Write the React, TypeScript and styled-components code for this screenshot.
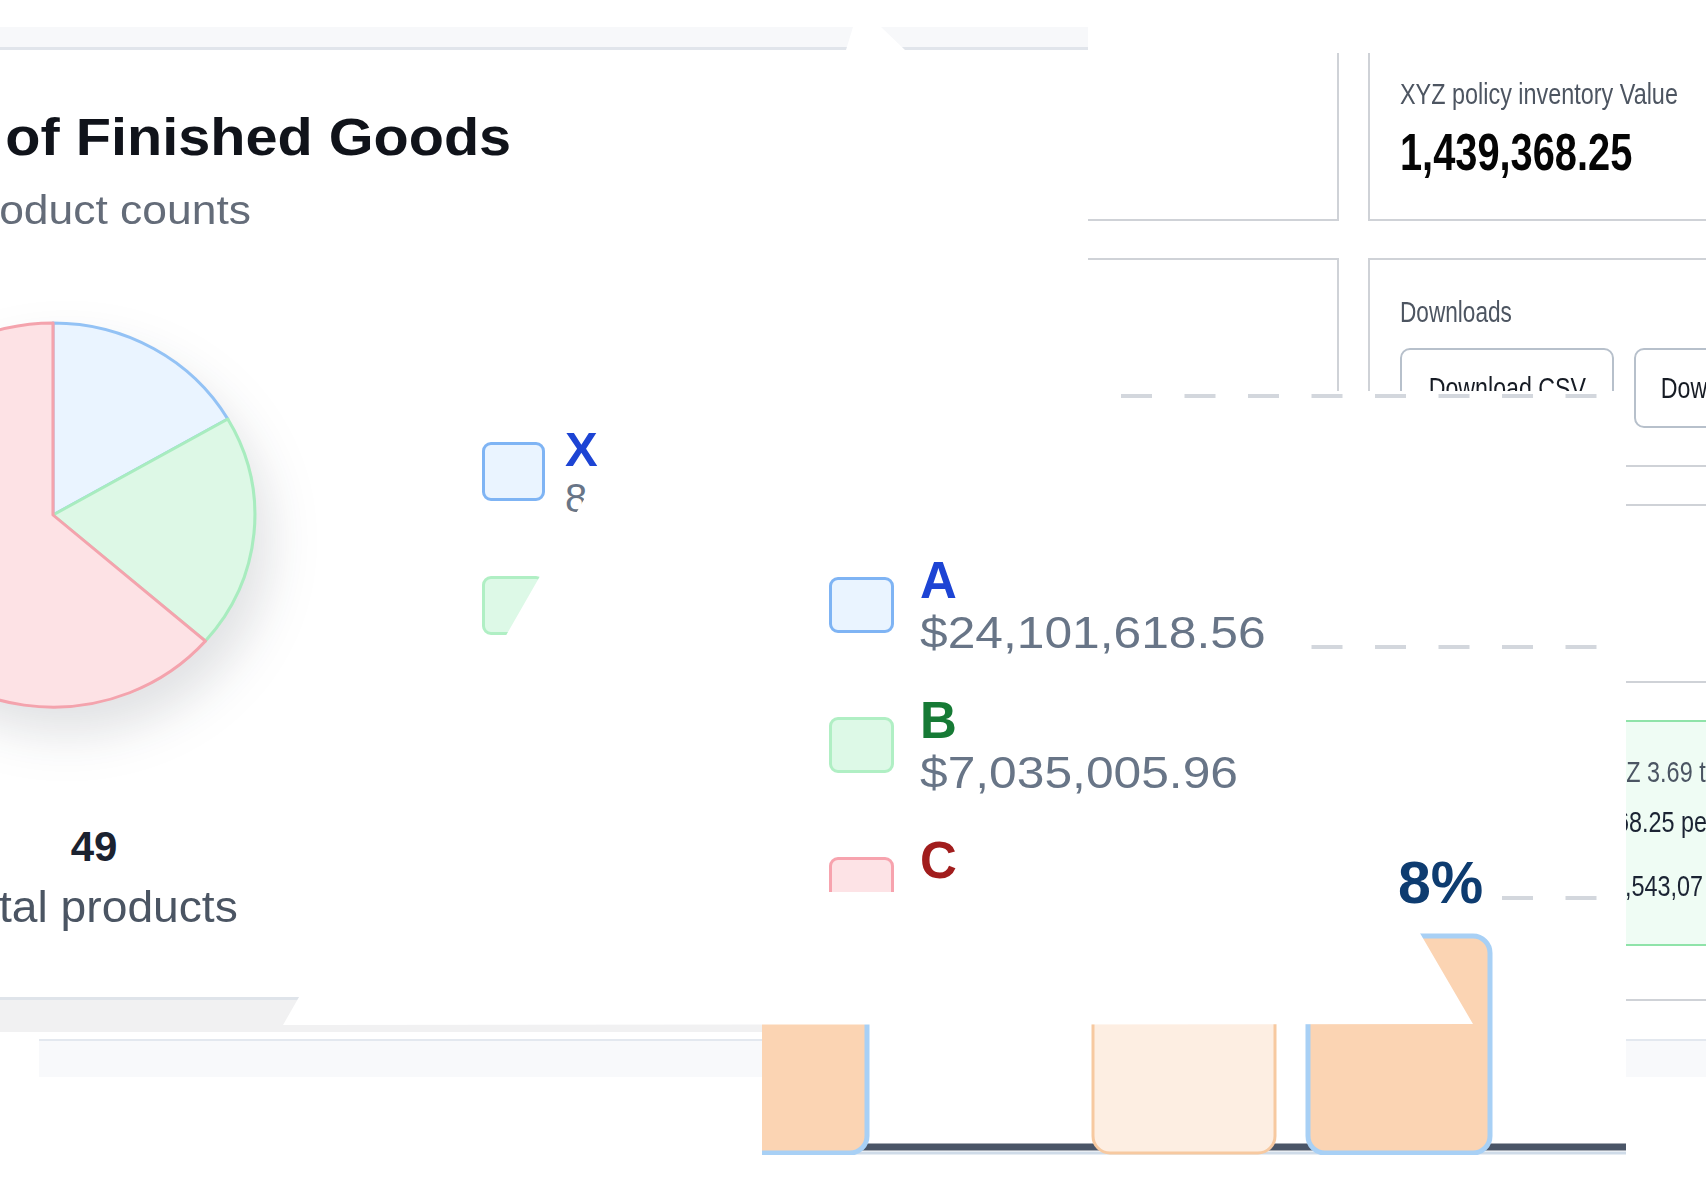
import React from "react";
import styled, { createGlobalStyle } from "styled-components";

const GlobalStyle = createGlobalStyle`
  html, body {
    margin: 0;
    padding: 0;
    background: #ffffff;
  }
  body {
    overflow: hidden;
    font-family: "Liberation Sans", Arial, sans-serif;
  }
  * {
    box-sizing: border-box;
  }
`;

// the whole picture is a collage of overlapping dashboard pieces
const Stage = styled.div`
  position: relative;
  width: 1706px;
  height: 1184px;
  overflow: hidden;
  background: #ffffff;
  font-family: "Liberation Sans", Arial, sans-serif;
`;

/* ---------- bottom piece: right hand dashboard column ---------- */

const Deck = styled.div`
  position: absolute;
  left: 1060px;
  top: 53px;
  display: grid;
  grid-template-columns: 279px 420px;
  grid-template-rows: 168px 209px 179px 226px 20px;
  column-gap: 29px;
  row-gap: 37px;
`;

const Card = styled.div<{ $open?: boolean; $tone?: "plain" | "good" }>`
  border: 2px solid ${(p) => (p.$tone === "good" ? "#8fe3a9" : "#cfd2d7")};
  border-top-width: ${(p) => (p.$open ? 0 : 2)}px;
  background: ${(p) => (p.$tone === "good" ? "#effcf4" : "#ffffff")};
  padding: ${(p) => (p.$open ? 23 : p.$tone === "good" ? 32 : 35)}px 30px 0 30px;
  overflow: hidden;
`;

const Rule = styled.div`
  grid-column: 2;
  margin-top: 16px;
  border-top: 2px solid #cfd2d7;
`;

const KpiLabel = styled.div`
  font-size: 30px;
  line-height: 36px;
  color: #4d5561;
  white-space: nowrap;
  transform: scaleX(0.78);
  transform-origin: left center;
`;

const KpiValue = styled.div`
  margin-top: 11px;
  font-size: 51px;
  line-height: 60px;
  font-weight: 700;
  color: #050505;
  white-space: nowrap;
  transform: scaleX(0.78);
  transform-origin: left center;
`;

const DeckLabel = styled(KpiLabel)`
  font-size: 29px;
  line-height: 35px;
`;

const ButtonRow = styled.div`
  display: flex;
  gap: 20px;
  margin-top: 18px;
`;

const ActionButton = styled.button<{ $w: number }>`
  flex: none;
  width: ${(p) => p.$w}px;
  height: 80px;
  padding: 0;
  display: flex;
  align-items: center;
  justify-content: center;
  background: #ffffff;
  border: 2px solid #b7c0cb;
  border-radius: 10px;
  font-family: inherit;
`;

const ButtonText = styled.span`
  display: inline-block;
  font-size: 29px;
  color: #161b24;
  white-space: nowrap;
  transform: scaleX(0.8);
`;

const NoteLine = styled.div<{ $tint: string; $gap: number }>`
  margin-top: ${(p) => p.$gap}px;
  font-size: 30px;
  line-height: 36px;
  color: ${(p) => p.$tint};
  white-space: nowrap;
  transform: scaleX(0.78);
  transform-origin: left center;
`;

const BaseStrip = styled.div`
  position: absolute;
  left: 39px;
  right: 0;
  top: 1039px;
  height: 38px;
  background: #f8f9fb;
  border-top: 2px solid #e3e8ef;
`;

/* ---------- left piece: finished goods card ---------- */

const LeftCard = styled.div`
  position: absolute;
  left: -360px;
  top: 27px;
  width: 1448px;
  height: 1005px;
  display: flex;
  flex-direction: column;
  background: #ffffff;
  overflow: hidden;
`;

const TopBand = styled.div`
  flex: none;
  height: 23px;
  background: #f7f8fa;
  border-bottom: 3px solid #e1e5eb;
`;

const CardBody = styled.div`
  flex: 1;
  display: flex;
  flex-direction: column;
  align-items: flex-start;
`;

const CardFooter = styled.div`
  flex: none;
  height: 35px;
  background: #f1f1f2;
  border-top: 3px solid #dfe4ea;
`;

const Header = styled.div`
  margin: 58px 0 0 26px;
`;

const Title = styled.div`
  font-size: 51px;
  line-height: 60px;
  font-weight: 700;
  color: #10131a;
  white-space: nowrap;
  transform: scaleX(1.13);
  transform-origin: left center;
`;

const Subtitle = styled.div`
  margin-top: 18px;
  font-size: 40px;
  line-height: 48px;
  color: #646c79;
  white-space: nowrap;
  transform: scaleX(1.11);
  transform-origin: left center;
`;

const ChartRow = styled.div`
  display: flex;
  align-items: flex-start;
  height: 392px;
  margin: 85px 0 0 207px;
`;

const PieSvg = styled.svg`
  flex: none;
  display: block;
  overflow: visible;
  filter: drop-shadow(14px 26px 24px rgba(20, 30, 50, 0.13));
`;

const Legend = styled.div<{ $gap: number }>`
  display: flex;
  flex-direction: column;
  gap: ${(p) => p.$gap}px;
`;

const SideLegend = styled(Legend)`
  margin: 106px 0 0 223px;
`;

const LegendRow = styled.div<{ $gap: number }>`
  display: flex;
  align-items: center;
  gap: ${(p) => p.$gap}px;
`;

const Swatch = styled.div<{ $w: number; $h: number; $fill: string; $edge: string }>`
  flex: none;
  width: ${(p) => p.$w}px;
  height: ${(p) => p.$h}px;
  background: ${(p) => p.$fill};
  border: 3px solid ${(p) => p.$edge};
  border-radius: 9px;
`;

const LegendText = styled.div<{ $gap: number }>`
  display: flex;
  flex-direction: column;
  gap: ${(p) => p.$gap}px;
`;

const LegendName = styled.div<{ $size: number; $tint: string }>`
  font-size: ${(p) => p.$size}px;
  line-height: 1;
  font-weight: 700;
  color: ${(p) => p.$tint};
`;

const LegendValue = styled.div<{ $size: number; $stretch: number }>`
  font-size: ${(p) => p.$size}px;
  line-height: 1;
  color: #687587;
  white-space: nowrap;
  transform: scaleX(${(p) => p.$stretch});
  transform-origin: left center;
`;

const TotalBlock = styled.div`
  width: 600px;
  margin: 111px 0 0 154px;
  text-align: center;
`;

const TotalNumber = styled.div`
  font-size: 42px;
  line-height: 50px;
  font-weight: 700;
  color: #1b2230;
`;

const TotalLabel = styled.div`
  margin-top: 8px;
  font-size: 44px;
  line-height: 53px;
  color: #4b5563;
  white-space: nowrap;
  transform: scaleX(1.05);
`;

/* ---------- middle piece: value chart ---------- */

const ChartPanel = styled.div`
  position: absolute;
  left: 762px;
  top: 391px;
  width: 864px;
  height: 764px;
  background: #ffffff;
  overflow: hidden;
`;

const ChartSvg = styled.svg`
  position: absolute;
  inset: 0;
  display: block;
`;

const ChartLegend = styled(Legend)`
  position: absolute;
  left: 67px;
  top: 164px;
`;

const Callout = styled.div`
  position: absolute;
  left: 636px;
  top: 463px;
  font-size: 59px;
  line-height: 1;
  font-weight: 700;
  color: #0e3c70;
`;

/* ---------- white scraps laid over the collage ---------- */

const Scrap = styled.div<{ $shape: string }>`
  position: absolute;
  inset: 0;
  background: #ffffff;
  clip-path: polygon(${(p) => p.$shape});
  pointer-events: none;
`;

const pieSlices = [
  { d: "M200,200 L200,4 A196,196 0 0 1 369.7,102 Z", fill: "#eaf4ff", edge: "#93c2f5" },
  { d: "M200,200 L369.7,102 A196,196 0 0 1 348,328.6 Z", fill: "#ddf8e6", edge: "#a8ecbf" },
  { d: "M200,200 L348,328.6 A196,196 0 1 1 200,4 Z", fill: "#fde2e5", edge: "#f4a3ad" },
];

const sideItems = [
  { name: "X", value: "8", tint: "#1d44d4", fill: "#eaf4ff", edge: "#7fb4f4" },
  { name: "Y", value: "10", tint: "#167a35", fill: "#ddf9e7", edge: "#b0efc4" },
  { name: "Z", value: "31", tint: "#a11d1d", fill: "#fde3e6", edge: "#f7a3ae" },
];

const chartItems = [
  { name: "A", value: "$24,101,618.56", tint: "#1d44d4", fill: "#eaf4ff", edge: "#7fb4f4" },
  { name: "B", value: "$7,035,005.96", tint: "#167a35", fill: "#ddf9e7", edge: "#b0efc4" },
  { name: "C", value: "$2,114,090.12", tint: "#a11d1d", fill: "#fde3e6", edge: "#f7a3ae" },
];

const gridLines = [
  { y: 5, from: 359 },
  { y: 256, from: 549.5 },
  { y: 507, from: 740 },
];

const bars = [
  { x: -80, y: 570, w: 185, fill: "#fbd4b3", edge: "#a8d0f5", stroke: 5 },
  { x: 331, y: 580, w: 182, fill: "#fdeee2", edge: "#f7c9a0", stroke: 3 },
  { x: 546, y: 545, w: 182, fill: "#fbd4b3", edge: "#a8d0f5", stroke: 5 },
];

export default function App() {
  return (
    <>
      <GlobalStyle />
      <Stage>
        <Deck>
          <Card $open />
          <Card $open>
            <KpiLabel>XYZ policy inventory Value</KpiLabel>
            <KpiValue>1,439,368.25</KpiValue>
          </Card>
          <Card />
          <Card>
            <DeckLabel>Downloads</DeckLabel>
            <ButtonRow>
              <ActionButton $w={214}>
                <ButtonText>Download CSV</ButtonText>
              </ActionButton>
              <ActionButton $w={220}>
                <ButtonText>Download Excel</ButtonText>
              </ActionButton>
            </ButtonRow>
          </Card>
          <Card />
          <Card />
          <Card />
          <Card $tone="good">
            <NoteLine $tint="#4b5563" $gap={0}>
              Inventory turnover XYZ 3.69 times per year
            </NoteLine>
            <NoteLine $tint="#1b2333" $gap={14}>
              Policy value: 1,439,368.25 per cycle
            </NoteLine>
            <NoteLine $tint="#1b2333" $gap={28}>
              Total stock value: $15,543,07 4.40
            </NoteLine>
          </Card>
          <Rule />
        </Deck>
        <BaseStrip />

        <LeftCard>
          <TopBand />
          <CardBody>
            <Header>
              <Title>Distribution of Finished Goods</Title>
              <Subtitle>Breakdown by product counts</Subtitle>
            </Header>
            <ChartRow>
              <PieSvg width={412} height={392} viewBox="0 0 400 400" preserveAspectRatio="none">
                {pieSlices.map((s) => (
                  <path key={s.d} d={s.d} fill={s.fill} stroke={s.edge} strokeWidth={3} strokeLinejoin="round" />
                ))}
              </PieSvg>
              <SideLegend $gap={41}>
                {sideItems.map((it) => (
                  <LegendRow key={it.name} $gap={20}>
                    <Swatch $w={63} $h={59} $fill={it.fill} $edge={it.edge} />
                    <LegendText $gap={4}>
                      <LegendName $size={49} $tint={it.tint}>
                        {it.name}
                      </LegendName>
                      <LegendValue $size={40} $stretch={1}>
                        {it.value}
                      </LegendValue>
                    </LegendText>
                  </LegendRow>
                ))}
              </SideLegend>
            </ChartRow>
            <TotalBlock>
              <TotalNumber>49</TotalNumber>
              <TotalLabel>Total products</TotalLabel>
            </TotalBlock>
          </CardBody>
          <CardFooter />
        </LeftCard>

        <ChartPanel>
          <ChartSvg width={864} height={764} viewBox="0 0 864 764">
            {gridLines.map((g) => (
              <line
                key={g.y}
                x1={g.from}
                x2={840}
                y1={g.y}
                y2={g.y}
                stroke="#d3d7dd"
                strokeWidth={4}
                strokeDasharray="31 32.5"
              />
            ))}
            <line x1={0} x2={864} y1={756} y2={756} stroke="#4a5567" strokeWidth={7} />
            <line x1={0} x2={864} y1={762} y2={762} stroke="#cfdbe8" strokeWidth={3} />
            {bars.map((b) => (
              <rect
                key={b.x}
                x={b.x}
                y={b.y}
                width={b.w}
                height={762 - b.y}
                rx={17}
                fill={b.fill}
                stroke={b.edge}
                strokeWidth={b.stroke}
              />
            ))}
          </ChartSvg>
          <ChartLegend $gap={40}>
            {chartItems.map((it) => (
              <LegendRow key={it.name} $gap={26}>
                <Swatch $w={65} $h={56} $fill={it.fill} $edge={it.edge} />
                <LegendText $gap={5}>
                  <LegendName $size={51} $tint={it.tint}>
                    {it.name}
                  </LegendName>
                  <LegendValue $size={44} $stretch={1.13}>
                    {it.value}
                  </LegendValue>
                </LegendText>
              </LegendRow>
            ))}
          </ChartLegend>
          <Callout>8%</Callout>
        </ChartPanel>

        <Scrap $shape="618px 440px, 762px 440px, 762px 892px, 1396px 892px, 1473px 1024px, 283px 1025px" />
        <Scrap $shape="853px 27px, 881px 27px, 905px 50px, 846px 50px" />
      </Stage>
    </>
  );
}
